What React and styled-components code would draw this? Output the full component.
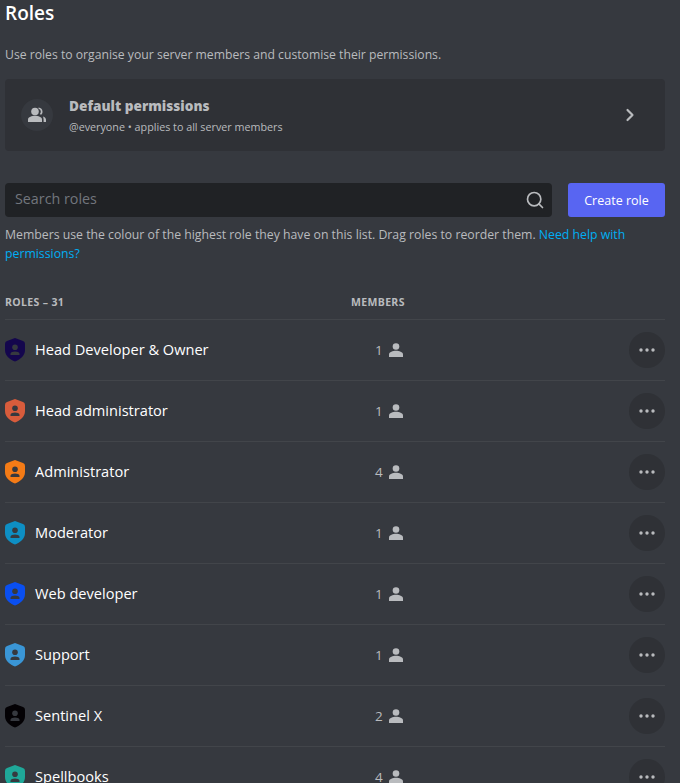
import styled, { createGlobalStyle } from 'styled-components';
import { Search, ChevronRight } from 'lucide-react';

const roles = [
    { name: 'Head Developer & Owner', colour: '#14064d', members: 1 },
    { name: 'Head administrator', colour: '#d85c3c', members: 1 },
    { name: 'Administrator', colour: '#f47b16', members: 4 },
    { name: 'Moderator', colour: '#0e8fc4', members: 1 },
    { name: 'Web developer', colour: '#0a4ff0', members: 1 },
    { name: 'Support', colour: '#3a96d6', members: 1 },
    { name: 'Sentinel X', colour: '#030104', members: 2 },
    { name: 'Spellbooks', colour: '#1fa899', members: 4 },
];

const Global = createGlobalStyle`
    html, body {
        margin: 0;
        height: 783px;
        overflow: hidden;
        background: #36393f;
    }
`;

const Page = styled.div`
    height: 783px;
    overflow: hidden;
    padding: 0 15px 0 5px;
    box-sizing: border-box;
    background: #36393f;
    font-family: "Open Sans", "Noto Sans", sans-serif;
`;

const Title = styled.h1`
    margin: 0;
    height: 26px;
    line-height: 26px;
    font-size: 19px;
    font-weight: 600;
    color: #fff;
`;

const Intro = styled.p`
    margin: 19px 0 0;
    height: 20px;
    line-height: 20px;
    font-size: 12.2px;
    color: #b9bbbe;
`;

const Card = styled.div`
    margin-top: 14px;
    height: 72px;
    display: flex;
    align-items: center;
    padding: 0 25px 0 16px;
    background: #2f3136;
    border-radius: 4px;
`;

const CardIcon = styled.div`
    width: 32px;
    height: 32px;
    margin-right: 16px;
    display: flex;
    align-items: center;
    justify-content: center;
    border-radius: 50%;
    background: #36393f;
    color: #b9bbbe;
`;

const CardText = styled.div`
    flex: 1;
`;

const CardTitle = styled.div`
    font-size: 13.6px;
    line-height: 20px;
    font-weight: 800;
    color: #b9bbbe;
`;

const CardSub = styled.div`
    margin-top: 3px;
    font-size: 10.75px;
    line-height: 16px;
    color: #b9bbbe;
`;

const Toolbar = styled.div`
    margin-top: 32px;
    display: flex;
    gap: 16px;
`;

const SearchBox = styled.div`
    flex: 1;
    height: 34px;
    display: flex;
    align-items: center;
    justify-content: space-between;
    padding: 0 7px 0 10px;
    background: #202225;
    border-radius: 4px;
    color: #b9bbbe;
`;

const Placeholder = styled.span`
    font-size: 14.3px;
    line-height: 20px;
    margin-bottom: 2px;
    color: #72767d;
`;

const CreateButton = styled.button`
    width: 97px;
    height: 34px;
    padding: 0;
    border: 0;
    border-radius: 3px;
    background: #5865f2;
    color: #fff;
    font-family: inherit;
    font-size: 12.5px;
`;

const Help = styled.p`
    margin: 8px 0 0;
    font-size: 12.27px;
    line-height: 19px;
    color: #b9bbbe;
`;

const HelpLink = styled.a`
    color: #00aff4;
`;

const HeaderRow = styled.div`
    margin-top: 30px;
    height: 27px;
    display: grid;
    grid-template-columns: 346px 1fr;
    align-items: start;
    font-size: 10.5px;
    line-height: 18px;
    font-weight: 700;
    color: #b9bbbe;
    border-bottom: 1px solid #42454a;
    box-sizing: border-box;
    letter-spacing: 0.35px;
`;

const Row = styled.div`
    height: 61px;
    box-sizing: border-box;
    display: grid;
    grid-template-columns: 30px 340px 1fr 36px;
    align-items: center;
    border-bottom: 1px solid #42454a;
`;

const Name = styled.span`
    font-size: 14.6px;
    line-height: 20px;
    margin-bottom: 3px;
    color: #fff;
`;

const Members = styled.span`
    display: flex;
    align-items: center;
    gap: 6px;
    font-size: 13.5px;
    color: #b9bbbe;
`;

const MoreButton = styled.button`
    width: 36px;
    height: 36px;
    padding: 0;
    border: 0;
    border-radius: 50%;
    display: flex;
    align-items: center;
    justify-content: center;
    background: #2f3136;
    color: #b9bbbe;
`;

function Shield({ colour }) {
    return (
        <svg width="20" height="24" viewBox="0 0 20 24">
            <path d="M10 0 L18 3 Q20 3.7 20 6 V12 C20 18 15 21.5 10 23.5 C5 21.5 0 18 0 12 V6 Q0 3.7 2 3 Z" fill={colour} />
            <circle cx="10" cy="9.2" r="2.8" fill="#36393f" />
            <path d="M5.5 17 V15.8 C5.5 14.2 8 13.4 10 13.4 C12 13.4 14.5 14.2 14.5 15.8 V17 Z" fill="#36393f" />
        </svg>
    );
}

function Person() {
    return (
        <svg width="14" height="14" viewBox="0 0 14 14" fill="#b9bbbe">
            <circle cx="7" cy="3.5" r="3.3" />
            <path d="M0 14 V11.5 C0 9 4 7.8 7 7.8 C10 7.8 14 9 14 11.5 V14 Z" />
        </svg>
    );
}

function Dots() {
    return (
        <svg width="16" height="4" viewBox="0 0 16 4" fill="#b9bbbe">
            <circle cx="2" cy="2" r="1.7" />
            <circle cx="8" cy="2" r="1.7" />
            <circle cx="14" cy="2" r="1.7" />
        </svg>
    );
}

function PeopleIcon() {
    return (
        <svg width="18" height="16" viewBox="0 0 18 16" fill="currentColor">
            <circle cx="7" cy="4.5" r="3.8" />
            <path d="M0 15 V12.5 C0 10 4 8.8 7 8.8 C10 8.8 14 10 14 12.5 V15 Z" />
            <path d="M10.5 0.6 C13 0.8 14.5 2.5 14.5 4.7 C14.5 6 14 7 13 7.8 L11.8 7 C12.4 6.4 12.8 5.6 12.8 4.7 C12.8 3.3 12 2.2 10.5 1.8 Z" />
            <path d="M15 9.5 C16.8 10.2 18 11.2 18 12.8 V15 H15.6 V12.8 C15.6 11.6 15.3 10.5 15 9.5 Z" />
        </svg>
    );
}

export default function App() {
    return (
        <>
            <Global />
            <Page>
                <Title>Roles</Title>
                <Intro>Use roles to organise your server members and customise their permissions.</Intro>
                <Card>
                    <CardIcon><PeopleIcon /></CardIcon>
                    <CardText>
                        <CardTitle>Default permissions</CardTitle>
                        <CardSub>@everyone • applies to all server members</CardSub>
                    </CardText>
                    <ChevronRight size={20} color="#b9bbbe" strokeWidth={2.6} />
                </Card>
                <Toolbar>
                    <SearchBox>
                        <Placeholder>Search roles</Placeholder>
                        <Search size={20} strokeWidth={2} />
                    </SearchBox>
                    <CreateButton>Create role</CreateButton>
                </Toolbar>
                <Help>
                    Members use the colour of the highest role they have on this list. Drag roles to reorder them.{' '}
                    <HelpLink>Need help with permissions?</HelpLink>
                </Help>
                <HeaderRow>
                    <span>ROLES – 31</span>
                    <span>MEMBERS</span>
                </HeaderRow>
                {roles.map((role) => (
                    <Row key={role.name}>
                        <Shield colour={role.colour} />
                        <Name>{role.name}</Name>
                        <Members>{role.members} <Person /></Members>
                        <MoreButton><Dots /></MoreButton>
                    </Row>
                ))}
            </Page>
        </>
    );
}
